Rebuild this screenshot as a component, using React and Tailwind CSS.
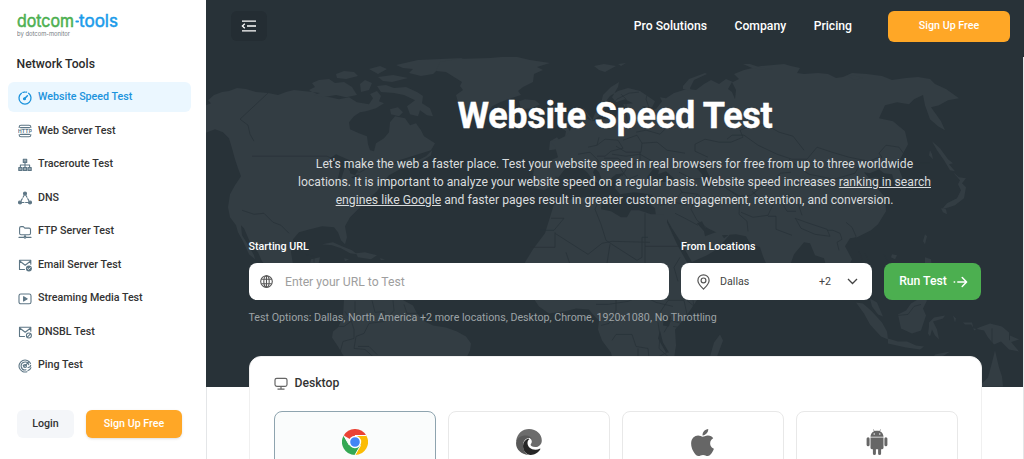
import React from 'react';
import { clsx } from 'clsx';
import { FaApple } from 'react-icons/fa';

const icon = { width: 14, height: 14, viewBox: '0 0 14 14', fill: 'none', stroke: 'currentColor', strokeWidth: 1.1, strokeLinecap: 'round', strokeLinejoin: 'round' };

const SpeedIcon = () => (
  <svg {...icon} strokeWidth="1.3">
    <path d="M10.6 2.3a6 6 0 1 1-7.2 0" />
    <path d="M4.9 1.4a6 6 0 0 1 3.7-.2" strokeDasharray="1.6 1.2" />
    <path d="M6.4 7.8 9.4 4.7" strokeWidth="1.5" />
    <circle cx="6.5" cy="7.7" r=".9" fill="currentColor" />
  </svg>
);

const HttpIcon = () => (
  <svg {...icon}>
    <path d="M1.2 3.4V3c0-1 .7-1.800 1.800-1.800h8c1.100 0 1.800.8 1.800 1.800v.4M1.200 10.600v.4c0 1 .7 1.800 1.800 1.800h8c1.100 0 1.800-.8 1.800-1.800v-.4M2.500 3.600h9M2.500 10.400h9" />
    <text x="0" y="8.900" fontSize="5.200" textLength="14" fontFamily="Roboto, sans-serif" fontWeight="700" fill="currentColor" stroke="none">HTTP</text>
  </svg>
);

const TracerouteIcon = () => (
  <svg {...icon}>
    <path d="M7 4v5M2.400 9V7h9.200v2" />
    <path d="M5.300 1.200h3.400v3.200H5.300zM.8 9.500h3.200v3H.8zM5.400 9.500h3.200v3H5.400zM10 9.500h3.200v3H10z" fill="currentColor" fillOpacity=".65" />
  </svg>
);

const DnsIcon = () => (
  <svg {...icon}>
    <path d="M6 4.500 3.100 9.700M8 4.500l2.900 5.200M4 11.500h6" strokeDasharray="2 1.600" />
    <circle cx="7" cy="2.600" r="1.500" fill="currentColor" />
    <circle cx="2" cy="11.500" r="1.500" fill="currentColor" />
    <circle cx="12" cy="11.500" r="1.500" fill="currentColor" />
  </svg>
);

const FtpIcon = () => (
  <svg {...icon}>
    <path d="M1.600 8.300V3c0-.9.5-1.400 1.400-1.400h2.300l1.500 1.500h4.300c.9 0 1.400.5 1.400 1.400v3.800c0 .9-.5 1.400-1.400 1.400H3c-.9 0-1.400-.5-1.400-1.400ZM7 9.700v2M1 12.400h4.500M8.500 12.400H13" />
    <circle cx="7" cy="12.300" r=".9" />
  </svg>
);

const EmailIcon = () => (
  <svg {...icon}>
    <path d="M6.500 11.500h-5v-9.200h11.300v4M1.700 3l5.500 4.200L12.600 3" />
    <circle cx="10.900" cy="10.500" r="3" fill="currentColor" stroke="none" />
    <path d="m9.600 10.500.9.9 1.700-1.700" stroke="#fff" strokeWidth=".9" />
  </svg>
);

const StreamIcon = () => (
  <svg {...icon}>
    <rect x="1" y="2" width="12" height="9.800" rx="1.800" />
    <path d="M5.600 4.700v4.400l3.600-2.200Z" fill="currentColor" />
  </svg>
);

const DnsblIcon = () => (
  <svg {...icon}>
    <path d="M6.500 11.500h-5v-9.200h11.300v4M1.700 3l5.500 4.200L12.600 3" />
    <circle cx="10.900" cy="10.500" r="2.500" />
    <path d="m9.300 12.100 3.200-3.200" />
  </svg>
);

const PingIcon = () => (
  <svg {...icon}>
    <path d="M12.500 4.500A6 6 0 1 0 9 12.700M10.800 5.800A3.900 3.900 0 1 0 8 10.800M11 2.600 6.800 7.200l-1.600-.8" />
    <circle cx="7" cy="7" r="1.500" />
    <path d="M10 8.500c1.500 0 2.600-1 2.700-2.200M10 11.500c1.500-.4 2.600-1.500 3-2.800" />
  </svg>
);

const TOOLS = [
  { label: 'Website Speed Test', Icon: SpeedIcon, active: true },
  { label: 'Web Server Test', Icon: HttpIcon },
  { label: 'Traceroute Test', Icon: TracerouteIcon },
  { label: 'DNS', Icon: DnsIcon },
  { label: 'FTP Server Test', Icon: FtpIcon },
  { label: 'Email Server Test', Icon: EmailIcon },
  { label: 'Streaming Media Test', Icon: StreamIcon },
  { label: 'DNSBL Test', Icon: DnsblIcon },
  { label: 'Ping Test', Icon: PingIcon },
];

function Logo() {
  return (
    <svg width="108" height="36" viewBox="0 -8 108 36" className="block">
      <g fontFamily="Inter, sans-serif" fontSize="17" strokeWidth=".5" strokeLinejoin="round">
        <text x="0" y="15" textLength="57" lengthAdjust="spacingAndGlyphs" fill="#4caf50" stroke="#4caf50">dotcom</text>
        <text x="62" y="15" textLength="39" lengthAdjust="spacingAndGlyphs" fill="#1a9bea" stroke="#1a9bea">tools</text>
      </g>
      <path d="M59.300 9.500h1.800" stroke="#1a9bea" strokeWidth="1.800" strokeLinecap="round" />
      <text x="0" y="23.500" textLength="53" lengthAdjust="spacingAndGlyphs" fontFamily="Inter, sans-serif" fontSize="6.200" fill="#74797e">by dotcom-monitor</text>
    </svg>
  );
}

function Sidebar() {
  return (
    <aside className="w-[206px] shrink-0 bg-white flex flex-col h-full pt-1">
      <div className="pl-[17px]"><Logo /></div>
      <h2 className="mt-4 pl-[16.500px] text-[12.200px] leading-4 font-medium text-[#2b2b2b]">Network Tools</h2>
      <nav className="mt-[10px] px-2 flex flex-col gap-[3.200px] w-[198px]">
        {TOOLS.map(({ label, Icon, active }) => (
          <a
            key={label}
            className={clsx(
              'h-[30.3px] w-[182.5px] rounded-md flex items-center pl-[9.5px] gap-[6.5px] text-[10.7px] font-medium',
              active ? 'bg-[#ebf7ff] text-[#1c93dc]' : 'text-[#333]'
            )}
          >
            <span className={clsx('relative top-[0.5px]', active ? 'text-[#1c93dc]' : 'text-[#5d7685]')}><Icon /></span>
            {label}
          </a>
        ))}
      </nav>
      <div className="mt-auto mb-[21.5px] pl-[17px] flex gap-3">
        <button className="w-[57px] h-[27.5px] rounded-md bg-[#f4f6f9] text-[10.7px] font-medium text-[#333]">Login</button>
        <button className="w-[96px] h-[27.5px] rounded-md bg-[#ffa726] text-[10.7px] font-medium text-white shadow-sm">Sign Up Free</button>
      </div>
    </aside>
  );
}

// Backdrop map, the viewBox uses the same units as the page
function WorldMap() {
  return (
    <svg viewBox="206 0 817 386" preserveAspectRatio="none" className="absolute inset-0 w-full h-full">
      <g fill="#333d43">
        {/* North America */}
        <path d="M206 105l5-2-3-3 6-5 8-3 7-1 8-3 9 1 10 3 12 1 10 2 8-3 8-2 9 1 10 1 8 4 9 1 9 2 10-2 8 5 12 2 4-6-3-4 7-3 4 5-2 5 5 2-8 5-10 3-6 1-6 4-5 6 1 7 9 4 8 3 1 8 2 6 4 1 2-8 8-5 5-6 1-10 5-6 10 2 5 7 6-2 5 7 3 6 11 7-4 7-16 5-16 5-9 5 13-4 8-3 3 4 12-6 6-6-1 5-11 7-14 6-6 1-11 6-6 8-6 8-8 7-9 9-10 10-5 9 2 11-2 7-4-4-3-8-4-5-12-1-12 3-11 3-6 7-2 13 2 12 7 5 9-2 2-8 9-2-2 9 1 4 10 3 5 8H305l-14-9-13 1-11-6-5-6-4-9-8-10-6-14-3-3 1 10 5 8 7 12 1 4-6-5-6-13-5-9-2-7-6-8-2-10 2-13 5-9 6-9-3-8-3-9-3-11-3-10-6-6-8-3-10 4-9 1-6 5-9 1Z" />
        {/* Arctic islands */}
        <path d="M312 83l7-3 10-1 6 4 9-1 8 5 5 8-11 2-10-2-13 2-9-2 6-2-8-1-3-2 6-3ZM336 74l8-3 10 1 4 4-12 3-9-1ZM360 84l5-4 7 3-3 7-8 2ZM369 69l11-3 7 3-9 5ZM378 77l15-2 15 3-16 4-9-1ZM396 65l22-5 45-2-11 6-14 5-5 5-12 2-12-3 4-4-10-1ZM377 86l9-1 8 3 12-1 11 5 6 4-1 7 8 5 3 8-6-1-7-5-2 6-8-2-3-8 8-6-11-5-10-2-13-1ZM390 109l8-2 5 5-4 4-8-2Z" />
        {/* Greenland, Iceland, Svalbard */}
        <path d="M440 62l17-3 33-1 23-2 17 4 20 3-13 4 6 3-9 4-1 8-10 5-5 4 3 4-10 3-11 4-8 4-5 7-6 5-8-3-7-5-8-8-2-7 7-5-3-4 2-4-8-5-8-5-10-1ZM519 101l6-2 10 1 5 4-8 4-11 1ZM594 66l10-2 12 2-11 6-6-2ZM618 64l8-1-5 3Z" />
        {/* Greater Antilles */}
        <path d="M322 244l11-2 9 4 10 4 5 4-7-1-9-5-9-3ZM356 253l9-1 12 3-6 4-13-2ZM380 258l5 1-4 1ZM344 258l5 1-4 2Z" />
        {/* South America */}
        <path d="M344 299h58l11 6 4 8 6 7 10 5 13 2 11 4 9 5 5 7-1 7-4 8v28H368l-10-15-14-15-6-10-6-9 1-6 5-4 5-11Z" />
        {/* British Isles */}
        <path d="M563 123l6-1-1 6 5 7 3 6 5 5-4 5-13 1 5-5-3-3 3-4-4-4 1-5-4-3ZM550 141l7-4 3 4-3 8-8 1Z" />
        {/* Eurasia and the Arabian peninsula */}
        <path d="M592 121l3-8 8-8 7-9 8-5 10-3 12 3 6 4 9 6-3 6-10-1 4 5 10-2 6-8-2-4 6 1 8-5 13-4 9 1 8-6 7-4 8 4 7-5 7 3 6-3-5-5 10-4 17-4 23-2 7 2 9 2-3 5 7 1 14-1 10 1 8 4 7-1 9-4 15 1 15 2 10 4 14-2 12-1 12 2 5 5 11 5 13 9-11 2-9 5-8 2 5 7 5 7 4 9-7-4-8-7-5-14-2-10-9 4-5 5-12-2-12 3-6 13 14 3 12 10 3 13-8 15-7 5 6 5 4 10-2 5-6-1-3-9-8-1-5-4-9 4-6-1 5 6 9-1-5 6 12 14 1 14-8 13-7 6-14 7-7 1-5 8 7 13-6 12-8 2-4-5-2 9 11 18-6-2-7-13-6-22-9-3-5-12-6-1-10 12-5 14-8 12-10-5-8-19-3-9-10-4-4-7-10-2-14 1-10-5-7-3-3-6-5 2 7 8 1 5 8-3 6-2 5 7 7-5-7 8-7 8-10 6-18 8-10-10-7-15-9-12-7-10-1-8-5-4 3-9-10-2-9-1-14 2-5-6 1-8 8-7-8 1-6 5-2 7-6-6-3-8-4-4-2 4 6 11-5-2-7-9-6-5-11-2-6 5-7 9-4 6-9 5-8-2-4-6 2-13 3-8 14-1 7-3-3-11-5-5 9-2 8-4 5-8 7-4 2-9 3-4 4 6 4 5 12-2 12-2 2-7 9 0-4-6 10-1-8-4-9 3-4-5 6-10 1-5-8 5-8 8-2 8 4 5-6 8-6 4-5-6-4-6-8 4-6-3Z" />
        {/* Africa */}
        <path d="M554 204l12-4 17-3 14-1 5 4-1 9 10 2 10 6 6 0 4-7 8 0 12 4 12 0 4 8 6 14 9 15 6 12 7 8 18-3-4 14-13 19-12 18-9 10 1 16-3 20H614l-3-13-9-12-4-11 1-9-6-6-4-5-13-1-12 3-15 2-10-7-10-15-5-14 3-6-2-9 8-13 12-16Z" />
        <path d="M714 342l6-8 3 6-6 16h-7Z" />
        {/* Far east and oceanic islands */}
        <path d="M932 141l8 7 8 11 5 4-4 1 6 7-5-1-6-10-7-10ZM953 172l6 5 7 1-4 5 4 4-2 11-9 7-6 2-7 2 5-6 10-5 4-8-3-6 2-4ZM941 208l5 1 1 5-4-2ZM925 234l2 2-2 8-2-3ZM892 254l5 1-2 4-4-2ZM925 257l6 2 1 9 5 10-6-2-6-10ZM856 302l7 1 9 8 10 11 5 9 1 8-7-3-11-12-6-11ZM870 298l7 4 6 14-5-2-6-8ZM888 338l10 3 9 0 9 4 8 1-4 3-14-2-18-4ZM898 314l8-4 5-7 10-6 6 3-4 8 3 7-5 15-9 3-11-5ZM929 322l5-5 11-2-2 3-10 3 4 8 2 10-4-4-3-6-2 7-2-3 1-7ZM953 315l3 3-1 4ZM963 322l9 0 2 8 5-3 11-4 12 3 7 6 0 7 10 12-10-2-8-8-7 3-6-7-4-7-10-2-3-4-6 0ZM1010 335l9 4-9 3ZM978 386l5-4 5-5 4-15 3-12 4 17 3 9 1 10ZM935 354l15-3-6 4-12 4Z" />
        <path d="M683 86l6-7 16-6 2 1-13 6-4 8 1 3-8-2ZM743 64l7 0 9 3 14 2-12 1-9-2ZM847 75l9 1 7 2-9 2ZM930 150l2 4 1 5-4-4Z" />
      </g>

      {/* Inland water */}
      <g fill="#283238">
        <path d="M330 158l6-4 9 4 7 3-2 5-5 1-4 12-3-1 2-9-7-4ZM350 167l8 3-3 5-5-2ZM351 177l9-3-5 5ZM647 177l6-8 6 1-1 4 8-3 9 8-6 3-18-1ZM699 163l7-4 4 6-4 4 5 10-1 8-7-1-1-12-6-7ZM667 219l5 9 9 14 11 20h-5l-10-18-10-22ZM664 316l7 0-2 10-6-1ZM660 330l3 12 6 10-3 0-8-14Z" />
        <path d="M732 82l4 8-1 9-3-7-4-3ZM590 181l2 0v8l-2-2Z" />
      </g>

      {/* Borders */}
      <g fill="none" stroke="#283238" strokeWidth=".8" strokeLinejoin="round">
        <path d="M269 92 240 119l8 6 2 9 4 7M252 156h75l9 4 10 2 4 9 10 1 14-8M242 210l12 4 10-1 9 9 8 3 8 8M314 262v-6l-9-2" />
        <path d="M335 326l9 0 11-8 0-17M345 311l6 9 3 9 0 9-11 3-3 11M372 300l3 12 9-1 0 10-15 2-5 10-8 3-2 12 11 1 10 9M393 300l1 10-7 8M404 304l3 9 6 0 7 0M358 346l11 0 8 8" />
        <path d="M600 120l7-9 10-12 12-6 10-1M628 125l-2-12 0-14-5-5M645 121l5-11-4-11 1-4M588 147l9-2 2-8M578 154l12-2 8 8 0 7-12 2M597 145l8-6 13 1 5 8-12 3-6 5-8 0M623 140l14-5 5 8-1 9-15 0-10-6M636 132l10-2 14 4 8-8M642 143l15-1 10 8 18 3M640 152l0 8-10 6-10-2M612 154l14 2 14-2 14 8M604 158l14 0 10 8-6 10M618 165l10 14 10-4M555 177l12 1 8 3M551 181l4 14M679 172l14 7 10-1M675 181l7 11-7 8M682 192l16 2 6 6M697 194l-6 15 6 11 13 10M660 205l15-3 12 3M675 213l10 5 13 7" />
        <path d="M708 157l-13-6 0-7 10-5 14 3 12 0 12-5-3-7 11-4 14-2 14 8 14 4 11 14M727 139l5-4 12 0 14 10 19 9 15 5 15 0 10-12 15 5 17 5 20 4 10-4M789 159l11 9 9 6 25 5 21-6 4-7 14-1 9-8-3-4 7-8 13 2 8 11 13 5 10 0M708 184l17 3 13 9 13-1 10-8 12-3 7-11 11-1M726 188l14 8-1 18 8 7 1 10M741 212l12 5 15-2 6-13 13-8M752 191l13 12 15-4 7 12 9 0M788 194l10 9 4 12M768 216l8 0 0 13 16 6M795 218l14 5 18 6 3 7-15-2-14-6-5-9ZM827 230l6 0 7 3 2 6-5 3 2 8M846 222l6 5 4 9-6 10 9 5 3 8M861 249l7-6 6 3 8-4 7 6M875 243l9 11 7 12M868 244l-3 9 5 9 11 4M899 180l9-4 14-8" />
        <path d="M555 232v15l-25 0M551 218l13 0-10 12-14 0-3 10M555 233l33 21 14-11 10-2 38 1M600 197l-5 12 6 15 5 16 6 4 25 16 5-3V237l6 0M645 213v50M645 246h35M680 257l-6 10 4 14M566 252l4 12 15 0 4 0M610 244l-3 19M596 304l12 0 20-3 14-6 14 7 17 4M612 340l4-6 16 0 4 12 12 2 1 10M601 325l8-2 7-13 0-11M638 348v12M660 312l8-12 16 0 3 14-6 9-10-3M658 322l2 13-1 13 10 9M673 326l12 2 6 5M675 350l17-3M671 320l-7 12M693 300l2 13M655 358l12-6M612 323l5-10M687 300l12 10 16-1 8-10" />
        <path d="M898 315l10-1 6-8 7-2M992 328v22" />
      </g>
    </svg>
  );
}

const CollapseIcon = () => (
  <svg width="16" height="14" viewBox="0 0 16 14" fill="none" stroke="#fff" strokeWidth="1.300">
    <path d="M1 2.200h14M6 7h9M1 11.800h14M3.800 4.800 1.400 7l2.400 2.200" />
  </svg>
);

function Header() {
  return (
    <header className="relative z-10 h-[57px] bg-[#283238] flex items-start pt-[11px] pr-[14px] text-white font-medium">
      <button className="ml-[25px] w-[36px] h-[30px] rounded-md bg-[#242d33] flex items-center justify-center"><CollapseIcon /></button>
      <nav className="ml-auto mr-9 h-[31px] flex items-center gap-[27.5px] text-[12.2px]">
        <a>Pro Solutions</a>
        <a>Company</a>
        <a>Pricing</a>
      </nav>
      <button className="w-[122px] h-[31px] rounded-md bg-[#ffa726] text-[10.7px] font-medium">Sign Up Free</button>
    </header>
  );
}

const GlobeIcon = () => (
  <svg width="13" height="13" viewBox="0 0 13 13" fill="none" stroke="#555" strokeWidth="1.100">
    <circle cx="6.500" cy="6.500" r="5.800" />
    <ellipse cx="6.500" cy="6.500" rx="2.700" ry="5.800" />
    <path d="M6.500.7v11.600M1.300 4.300h10.400M1.300 8.700h10.400" />
  </svg>
);

const PinIcon = () => (
  <svg width="13" height="16" viewBox="0 0 13 16" fill="none" stroke="#555" strokeWidth="1.200" strokeLinejoin="round">
    <path d="M6.500 15.200C4 12.500.9 9.700.9 6.400a5.600 5.600 0 0 1 11.200 0c0 3.300-3.100 6.100-5.600 8.800Z" />
    <circle cx="6.500" cy="6.400" r="2.400" />
  </svg>
);

function TestForm() {
  return (
    <div className="mt-[30px] flex gap-3">
      <div className="w-[420.5px]">
        <label className="block text-[10.7px] leading-4 font-medium">Starting URL</label>
        <div className="mt-2 h-[36.5px] rounded-lg bg-white flex items-center pl-[11.5px] gap-3">
          <GlobeIcon />
          <input placeholder="Enter your URL to Test" className="flex-1 text-[12.2px] text-[#333] placeholder:text-[#9e9e9e] outline-none" />
        </div>
      </div>
      <div className="w-[191px]">
        <label className="block text-[10.7px] leading-4 font-medium">From Locations</label>
        <div className="mt-2 h-[36.5px] rounded-lg bg-white flex items-center pl-4 pr-[14px] text-[10.7px] text-[#444]">
          <PinIcon />
          <span className="ml-[10px]">Dallas</span>
          <span className="ml-auto mr-4">+2</span>
          <svg width="11" height="7" viewBox="0 0 11 7" fill="none" stroke="#444" strokeWidth="1.300"><path d="m1 1 4.500 4.500L10 1" /></svg>
        </div>
      </div>
      <button className="mt-6 w-[97px] h-[36.5px] rounded-lg bg-[#4caf50] flex items-center justify-center pl-[2px] gap-[6px] text-[12.2px] font-medium">
        Run Test
        <svg width="15" height="12" viewBox="0 0 15 12" fill="none" stroke="#fff" strokeWidth="1.500" strokeLinecap="round" strokeLinejoin="round">
          <path d="M1.200 6h.4M4.800 6h8.600M9.200 1.500 13.600 6l-4.400 4.500" />
        </svg>
      </button>
    </div>
  );
}

const ChromeIcon = () => (
  <svg width="26" height="26" viewBox="0 0 26 26">
    <path d="M13 13 1.740 6.500A13 13 0 0 1 24.260 6.500Z" fill="#ea4335" />
    <path d="M13 13V6.500h11.260A13 13 0 0 1 13 26Z" fill="#fbbc05" />
    <path d="M1.740 6.500 7.370 16.250 13 13l5.630 3.250L13 26A13 13 0 0 1 1.740 6.500Z" fill="#34a853" />
    <path d="M13 6.500h11.260M7.370 16.250 1.740 6.500M18.630 16.250 13 26" stroke="#fff" strokeWidth="1" />
    <circle cx="13" cy="13" r="5.500" fill="#4285f4" stroke="#fff" strokeWidth="1.400" />
  </svg>
);

const EdgeIcon = () => (
  <svg width="26" height="26" viewBox="0 0 26 26">
    <path d="M.2 11.500C1.400 4.500 6.500.1 13 .1c7.500 0 12.800 5.300 12.800 11.300 0 4-3 6.600-6.600 6.600-3 0-4.600-1-4.600-2.200 0-.8 1.200-1.300 1.200-3.200 0-2.500-2.400-4.600-6-4.600-4.500 0-8.500 2.200-9.600 5.200Z" fill="#6c6c6c" />
    <path d="M.1 13.500C.6 8.700 5.300 6.400 9.700 6.400c3.600 0 5.700 2 6.200 4.200-1-1.300-2.300-1.800-3.700-1.500-3.400 1-5.400 4.200-5.200 8 .2 3.800 2 7.200 5.200 8.800C5.200 25.500-.5 20 .1 13.500Z" fill="#595959" />
    <path d="M12.200 9.500C8.800 10.700 7 13.500 7 17c0 4.800 3.500 9 7.800 8.900 4 0 7.600-2.300 9.500-5.600.3-.6-.1-.9-.6-.6-1.300.7-2.700 1-4.200 1-4.800 0-8-3-8-6.700 0-1.800.7-3.300 2-4.100Z" fill="#262626" />
  </svg>
);

const AndroidIcon = () => (
  <svg width="22" height="26" viewBox="0 0 22 26" fill="#666">
    <path d="M4.500 7.800C4.500 5 6.200 3 8.100 2.200L7 .6l.4-.3 1.200 1.700c1.500-.5 3.300-.5 4.800 0L14.600.3l.4.3-1.100 1.600c1.900.8 3.600 2.800 3.600 5.600Z" />
    <path d="M4.500 8.600h13v10.200c0 .8-.6 1.400-1.400 1.400h-1v4.200a1.500 1.500 0 0 1-3 0v-4.200H9.900v4.200a1.500 1.500 0 0 1-3 0v-4.200h-1c-.8 0-1.400-.6-1.400-1.400Z" />
    <rect x=".6" y="8.200" width="3" height="9" rx="1.500" />
    <rect x="18.400" y="8.200" width="3" height="9" rx="1.500" />
    <circle cx="8.200" cy="5" r=".7" fill="#fff" />
    <circle cx="13.800" cy="5" r=".7" fill="#fff" />
  </svg>
);

const BROWSERS = [
  { id: 'chrome', icon: <ChromeIcon />, selected: true },
  { id: 'edge', icon: <EdgeIcon /> },
  { id: 'ios', icon: <FaApple size={31} color="#666" /> },
  { id: 'android', icon: <AndroidIcon /> },
];

function BrowserPanel() {
  return (
    <section className="mt-[30.5px] w-[733px] h-[140px] rounded-xl bg-white border border-[#f0f0f0] px-[24px]">
      <h3 className="mt-[18px] flex items-center gap-[7px] text-[12.2px] leading-4 font-medium text-[#333]">
        <svg width="14" height="13" viewBox="0 0 14 13" fill="none" stroke="#666" strokeWidth="1.200" className="relative top-[0.5px]">
          <rect x="1" y="1.300" width="12" height="8" rx="1.800" />
          <path d="M7 9.300v2.600M3.500 12.200h7" />
        </svg>
        Desktop
      </h3>
      <div className="mt-[20px] flex gap-3">
        {BROWSERS.map((b) => (
          <div
            key={b.id}
            className={clsx(
              'w-[162px] h-[90px] shrink-0 rounded-lg border pt-[16.5px] flex justify-center items-start',
              b.selected ? 'border-[#8ea4af] bg-[#fafcfc]' : 'border-[#e8e8e8]'
            )}
          >
            <div className="h-[27px] flex items-center">{b.icon}</div>
          </div>
        ))}
      </div>
    </section>
  );
}

export default function App() {
  return (
    <div className="w-[1024px] h-[459px] overflow-hidden flex bg-white font-['Roboto',sans-serif]">
      <Sidebar />
      <div className="flex-1 h-full min-w-0">
        <Header />
        <main className="relative h-[402px] border-l border-r border-[#e4e6e8]">
          <div className="absolute -left-px right-0 -top-[57px] h-[386.5px] bg-[#283238]"><WorldMap /></div>
          <div className="relative pl-[41.5px] text-white">
            <h1 className="pt-[38px] w-[733px] text-center text-[36px] leading-[42px] font-bold tracking-[-0.25px] [-webkit-text-stroke:0.4px_#fff]">Website Speed Test</h1>
            <p className="mt-[17.5px] w-[732px] text-center text-[12.2px] leading-[18.3px] text-[#d9dcde]">
              Let's make the web a faster place. Test your website speed in real browsers for free from up to three worldwide
              <br />
              locations. It is important to analyze your website speed on a regular basis. Website speed increases <a className="underline">ranking in search</a>
              <br />
              <a className="underline">engines like Google</a> and faster pages result in greater customer engagement, retention, and conversion.
            </p>
            <TestForm />
            <p className="mt-[10px] text-[10.7px] leading-4 text-[#9da3a6]">
              Test Options: Dallas, North America +2 more locations, Desktop, Chrome, 1920x1080, No Throttling
            </p>
            <BrowserPanel />
          </div>
        </main>
      </div>
    </div>
  );
}
